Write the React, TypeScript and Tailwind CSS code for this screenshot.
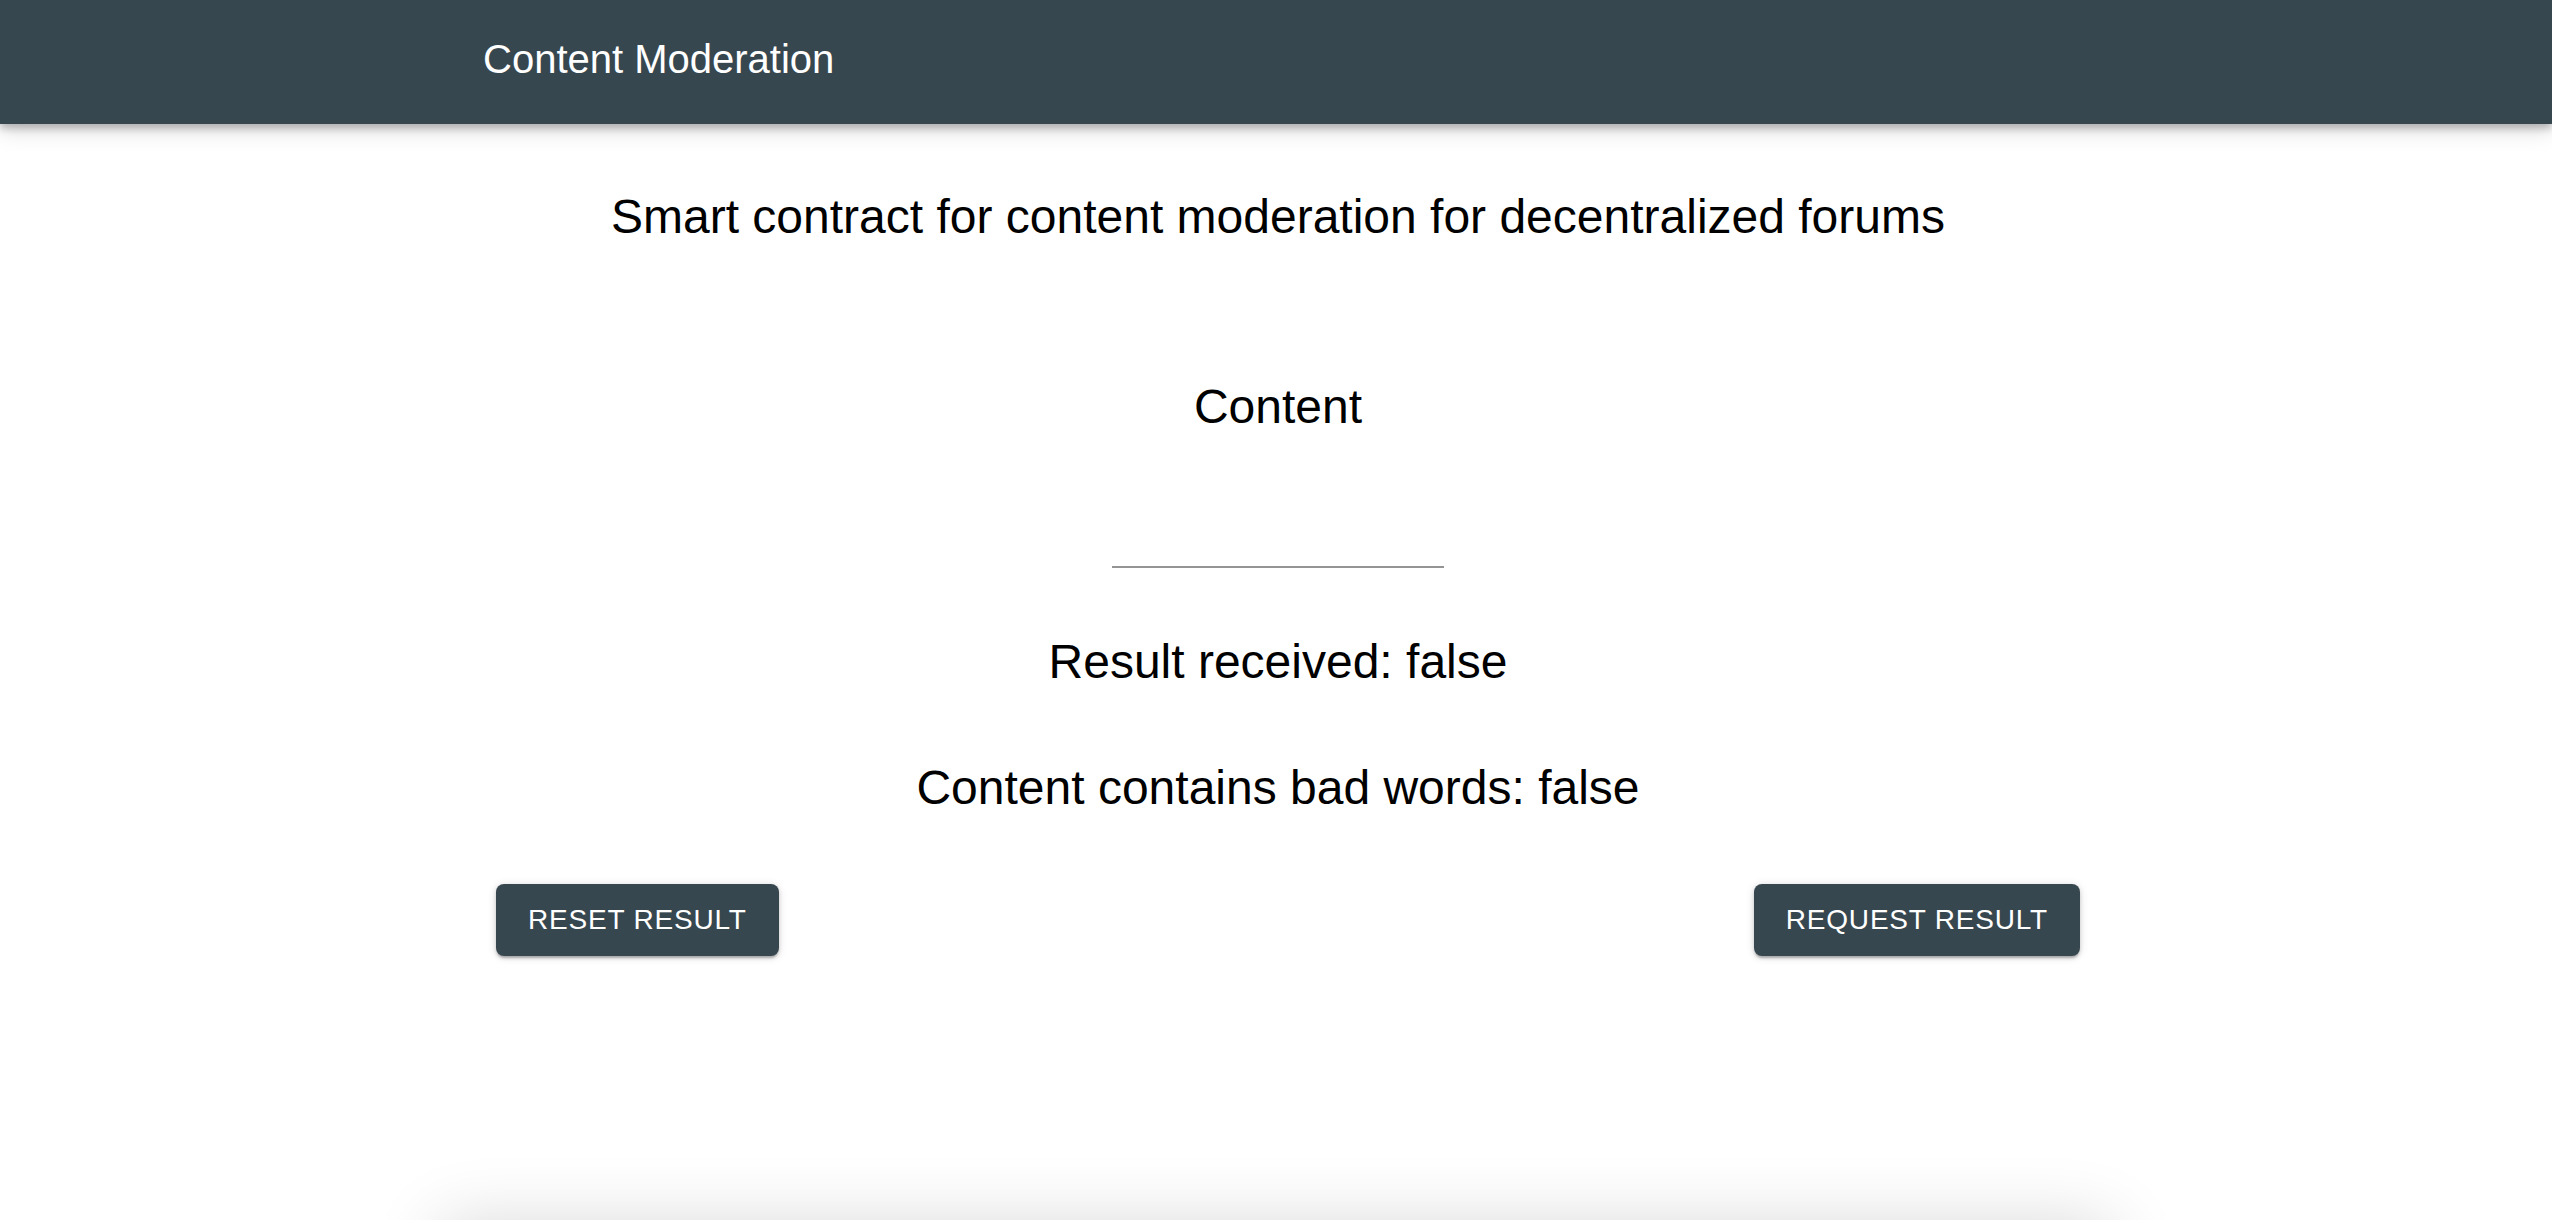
import React from "react";

export default function App() {
  const font = { fontFamily: '"Liberation Sans", Arial, Helvetica, sans-serif' };
  return (
    <div className="w-full min-h-[1400px] bg-white overflow-hidden" style={font}>
      <header className="relative z-10 h-[124px] bg-[#37474f] flex items-center pl-[483px] pb-[6px] shadow-[0_4px_8px_rgba(0,0,0,0.25),0_8px_20px_rgba(0,0,0,0.12)]">
        <span className="text-[40px] leading-[56px] text-white">Content Moderation</span>
      </header>
      <main className="flex flex-col items-center pl-[4px]">
        <h1 className="mt-[61px] text-[48px] leading-[64px] text-black font-normal">
          Smart contract for content moderation for decentralized forums
        </h1>
        <h2 className="mt-[126px] text-[48px] leading-[64px] text-black font-normal">Content</h2>
        <div className="mt-[69px] w-[332px] h-[60px] border-b-2 border-[#949494]"></div>
        <p className="mt-[62px] text-[48px] leading-[64px] text-black">Result received: false</p>
        <p className="mt-[62px] text-[48px] leading-[64px] text-black">Content contains bad words: false</p>
      </main>
      <div className="mt-[64px] flex justify-between pl-[496px] pr-[472px]">
        <button className="h-[72px] px-[32px] rounded-[8px] bg-[#37474f] text-white text-[28px] tracking-[0.8px] uppercase shadow-[0_3px_2px_-1px_rgba(0,0,0,0.2),0_2px_4px_rgba(0,0,0,0.14),0_1px_10px_rgba(0,0,0,0.12)]">
          Reset Result
        </button>
        <button className="h-[72px] px-[32px] rounded-[8px] bg-[#37474f] text-white text-[28px] tracking-[0.8px] uppercase shadow-[0_3px_2px_-1px_rgba(0,0,0,0.2),0_2px_4px_rgba(0,0,0,0.14),0_1px_10px_rgba(0,0,0,0.12)]">
          Request Result
        </button>
      </div>
      <div className="mt-[272px] ml-[440px] w-[1672px] h-[200px] bg-white rounded-[8px] shadow-[0_-4px_70px_rgba(0,0,0,0.16)]"></div>
    </div>
  );
}
